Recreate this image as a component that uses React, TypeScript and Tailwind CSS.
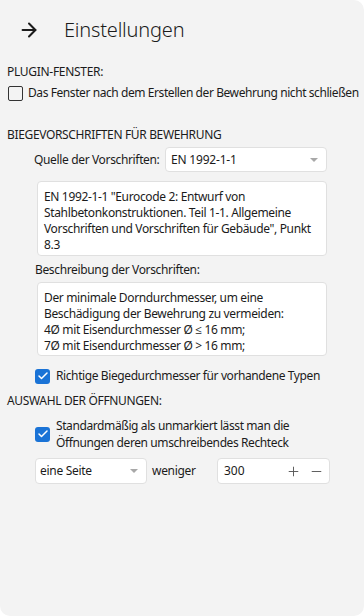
import { ArrowRight, Check, Plus, Minus } from 'lucide-react';

const font = { fontFamily: '"Noto Sans", "Open Sans", sans-serif' };

const Caret = () => (
  <svg width="8" height="4" viewBox="0 0 8 4" className="text-[#a8a8a8]">
    <path d="M0 0h8L4 4z" fill="currentColor" />
  </svg>
);

const Box = ({ checked }: { checked: boolean }) =>
  checked ? (
    <span className="flex h-[15px] w-[15px] shrink-0 items-center justify-center rounded-[3px] bg-[#1a73d6]">
      <Check className="h-3 w-3 text-white" strokeWidth={3} />
    </span>
  ) : (
    <span className="h-[15px] w-[15px] shrink-0 rounded-[2px] border border-[#333]" />
  );

const App = () => (
  <div className="h-[616px] w-[364px] overflow-hidden bg-white">
    <div
      className="h-full w-full rounded-tr-[10px] rounded-b-[10px] bg-[#f3f3f3] text-[12px] leading-4 text-[#1b1b1b]"
      style={font}
    >
      <div className="flex h-[60px] items-center pl-[18px]">
        <ArrowRight className="h-[22px] w-[22px] text-[#1b1b1b]" strokeWidth={2.2} />
        <span className="ml-[24px] text-[20px] font-light tracking-[-0.2px]">Einstellungen</span>
      </div>

      <div className="pl-[7px] pt-[4px] tracking-[-0.3px]">PLUGIN-FENSTER:</div>
      <div className="mt-[5px] flex items-center gap-[5px] pl-[8px]">
        <Box checked={false} />
        <span className="tracking-[-0.42px] whitespace-nowrap">Das Fenster nach dem Erstellen der Bewehrung nicht schließen</span>
      </div>

      <div className="mt-[26px] pl-[7px] tracking-[-0.35px]">BIEGEVORSCHRIFTEN FÜR BEWEHRUNG</div>

      <div className="mt-[4px] flex items-center pl-[34px]">
        <span className="w-[131px] tracking-[-0.35px]">Quelle der Vorschriften:</span>
        <div className="flex h-[25px] w-[162px] items-center justify-between rounded-[4px] border border-[#e0e0e0] bg-white pl-[5px] pr-[8px]">
          <span className="tracking-[-0.2px]">EN 1992-1-1</span>
          <Caret />
        </div>
      </div>

      <div className="ml-[37px] mt-[9px] h-[75px] w-[290px] rounded-[4px] border border-[#e0e0e0] bg-white px-[6px] pt-[7px] tracking-[-0.35px]">
        EN 1992-1-1 "Eurocode 2: Entwurf von Stahlbetonkonstruktionen. Teil 1-1. Allgemeine Vorschriften und Vorschriften für Gebäude", Punkt 8.3
      </div>

      <div className="mt-[6px] pl-[35px] tracking-[-0.35px]">Beschreibung der Vorschriften:</div>

      <div className="ml-[37px] mt-[4px] h-[74px] w-[290px] rounded-[4px] border border-[#e0e0e0] bg-white px-[6px] pt-[7px] tracking-[-0.35px]">
        <div>Der minimale Dorndurchmesser, um eine</div>
        <div>Beschädigung der Bewehrung zu vermeiden:</div>
        <div>4Ø mit Eisendurchmesser Ø ≤ 16 mm;</div>
        <div>7Ø mit Eisendurchmesser Ø &gt; 16 mm;</div>
      </div>

      <div className="mt-[12px] flex items-center gap-[6px] pl-[35px]">
        <Box checked />
        <span className="tracking-[-0.4px]">Richtige Biegedurchmesser für vorhandene Typen</span>
      </div>

      <div className="mt-[9px] pl-[7px] tracking-[-0.35px]">AUSWAHL DER ÖFFNUNGEN:</div>

      <div className="mt-[8px] flex items-center gap-[6px] pl-[35px]">
        <Box checked />
        <span className="leading-[17px] tracking-[-0.4px]">
          Standardmäßig als unmarkiert lässt man die
          <br />
          Öffnungen deren umschreibendes Rechteck
        </span>
      </div>

      <div className="mt-[7px] flex items-center pl-[35px]">
        <div className="flex h-[26px] w-[112px] items-center justify-between rounded-[4px] border border-[#e0e0e0] bg-white pl-[4px] pr-[8px]">
          <span className="tracking-[-0.3px]">eine Seite</span>
          <Caret />
        </div>
        <span className="ml-[5px] w-[65px] tracking-[-0.3px]">weniger</span>
        <div className="flex h-[26px] w-[113px] items-center rounded-[4px] border border-[#e0e0e0] bg-white pl-[6px] pr-[5px]">
          <span className="flex-1">300</span>
          <Plus className="h-[15px] w-[15px] text-[#555]" strokeWidth={1.5} />
          <Minus className="ml-[8px] h-[15px] w-[15px] text-[#555]" strokeWidth={1.5} />
        </div>
      </div>
    </div>
  </div>
);

export default App;
